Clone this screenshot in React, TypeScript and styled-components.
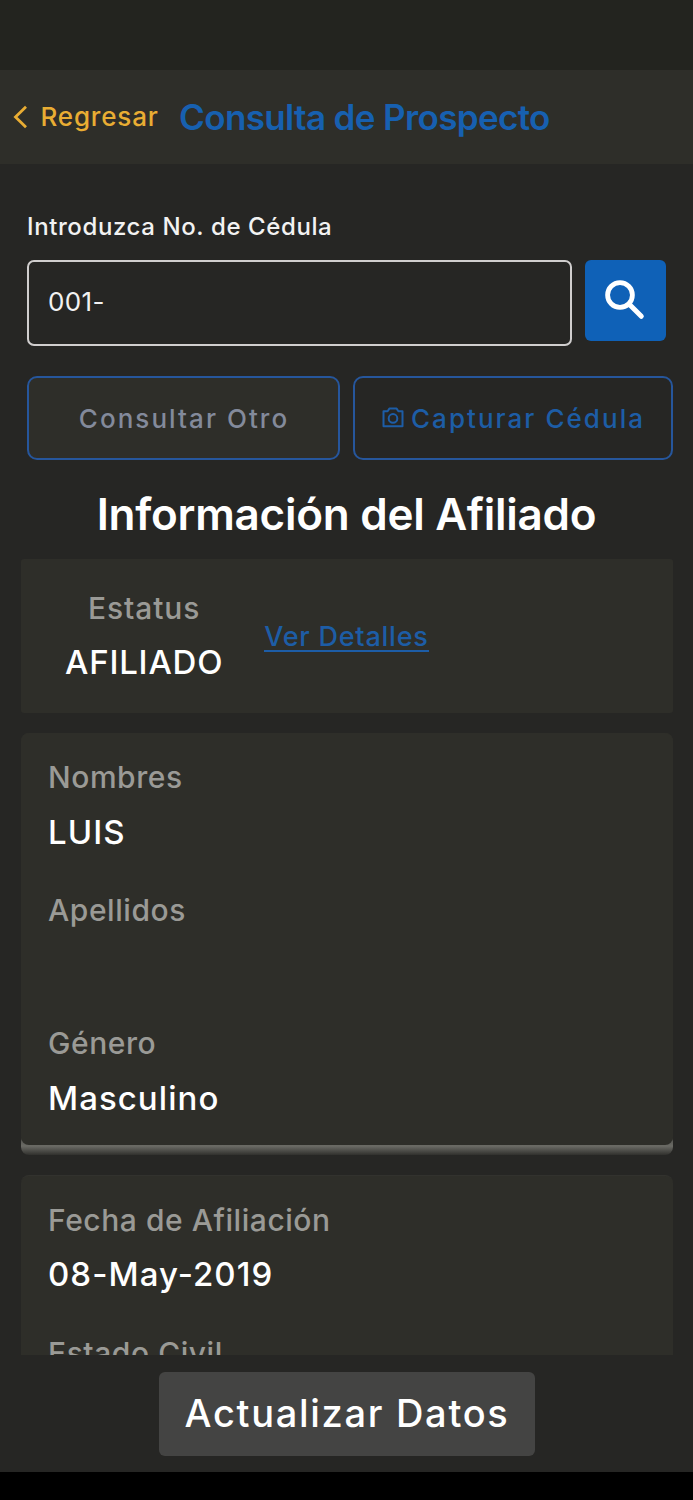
import React from 'react';
import styled, { createGlobalStyle } from 'styled-components';

const GlobalStyle = createGlobalStyle`
  *, *::before, *::after { box-sizing: border-box; }
  body {
    margin: 0;
    background: #000;
    font-family: Inter, "Liberation Sans", sans-serif;
    font-weight: 500;
  }
  button { font-family: inherit; font-weight: inherit; cursor: pointer; }
`;

const Screen = styled.div`
  display: flex;
  flex-direction: column;
  width: 693px;
  height: 1500px;
  overflow: hidden;
  background: #262624;
`;

const StatusBar = styled.div`
  flex: none;
  height: 70px;
  background: #23241f;
`;

const Header = styled.header`
  flex: none;
  display: flex;
  align-items: center;
  height: 94px;
  padding-left: 12px;
  background: #2e2e29;
`;

const BackButton = styled.button`
  display: flex;
  align-items: center;
  gap: 11.5px;
  margin-right: 20.5px;
  padding: 0;
  border: 0;
  background: none;
  color: #e9ad33;
  font-size: 26px;
  line-height: 32px;
  letter-spacing: 0.82px;
`;

const Title = styled.h1`
  margin: 0;
  color: #1760b0;
  font-size: 35px;
  font-weight: 600;
  line-height: 44px;
  letter-spacing: -0.64px;
`;

const Form = styled.form`
  flex: none;
  display: flex;
  flex-direction: column;
  padding: 48px 20px 0 27px;
`;

const InputLabel = styled.label`
  color: #f2f2f2;
  font-size: 24px;
  line-height: 30px;
  letter-spacing: 0.6px;
`;

const SearchRow = styled.div`
  display: flex;
  align-items: flex-start;
  gap: 13px;
  margin-top: 18px;
`;

const IdInput = styled.input`
  width: 545px;
  height: 86px;
  padding: 0 19px 4px;
  border: 2px solid #d0cece;
  border-radius: 7px;
  outline: 0;
  background: transparent;
  color: #f2f2f2;
  font-family: inherit;
  font-size: 26px;
  letter-spacing: 0.4px;
`;

const SearchButton = styled.button`
  display: flex;
  width: 81px;
  height: 81px;
  padding: 20px 0 0 20px;
  border: 0;
  border-radius: 6px;
  background: #0f61b7;
`;

const ActionRow = styled.div`
  display: flex;
  gap: 13px;
  margin-top: 30px;
`;

const OutlineButton = styled.button<{ $width: number; $muted?: boolean }>`
  display: flex;
  align-items: center;
  justify-content: center;
  gap: 7px;
  width: ${({ $width }) => $width}px;
  height: 84px;
  padding: 0 0 0 1px;
  border: 2px solid #26569c;
  border-radius: 10px;
  background: ${({ $muted }) => ($muted ? '#2e2e29' : 'transparent')};
  color: ${({ $muted }) => ($muted ? '#838a9b' : '#1d5da6')};
  font-size: 26px;
  letter-spacing: 2.04px;
`;

const SectionTitle = styled.h2`
  flex: none;
  margin: 27px 0 2px;
  color: #fff;
  font-size: 44px;
  font-weight: 600;
  line-height: 54px;
  letter-spacing: -0.26px;
  text-align: center;
`;

const Details = styled.main`
  flex: none;
  height: 812px;
  padding: 16px 20px 0 21px;
  overflow: hidden;
`;

const StatusCard = styled.section`
  display: flex;
  align-items: center;
  gap: 41px;
  height: 154px;
  padding: 2px 0 0 44px;
  border-radius: 3px;
  background: #2e2e29;
`;

const CardShadow = styled.div`
  margin-top: 20px;
  padding-bottom: 10px;
  border-radius: 8px;
  background: linear-gradient(to top, #30302d 0, #6b6b65 9px, #5a5a55 14px, #2e2e29 17px);
`;

const Card = styled.section`
  display: flex;
  flex-direction: column;
  gap: 38.5px;
  padding: 26.4px 27px 24.7px;
  border-radius: 8px;
  background: #2e2e29;
`;

const DateCard = styled(Card)`
  margin-top: 20px;
  border-top: 1px solid #32322e;
`;

const FieldLabel = styled.div`
  height: 36px;
  color: #9a9a96;
  font-size: 30px;
  line-height: 36px;
  letter-spacing: 0.55px;
`;

const FieldValue = styled.div`
  height: 44px;
  margin-top: 14.3px;
  margin-bottom: 0.2px;
  color: #fff;
  font-size: 33px;
  line-height: 44px;
  letter-spacing: 1.05px;
`;

const StatusText = styled.div`
  display: flex;
  flex-direction: column;
  align-items: center;

  ${FieldLabel} { letter-spacing: 0.9px; }
  ${FieldValue} { letter-spacing: 0.78px; }
`;

const DetailsLink = styled.a`
  border-bottom: 2px solid #1d5da6;
  color: #1d5da6;
  font-size: 27px;
  line-height: 27px;
  letter-spacing: 0.76px;
`;

const Footer = styled.footer`
  flex: none;
  display: flex;
  justify-content: center;
  height: 117px;
  padding-top: 17px;
`;

const UpdateButton = styled.button`
  width: 376px;
  height: 84px;
  padding: 0 0 2px 1px;
  border: 0;
  border-radius: 6px;
  background: #444443;
  color: #fff;
  font-size: 38px;
  letter-spacing: 1.7px;
`;

const HomeArea = styled.div`
  flex: none;
  height: 28px;
  background: #000;
`;

const ChevronIcon = () => (
  <svg width="17" height="24" viewBox="0 0 17 24" fill="none" stroke="currentColor" strokeWidth="2.8">
    <path d="M14 1.8 L3.5 12 L14 22.2" />
  </svg>
);

const SearchIcon = () => (
  <svg width="40" height="40" viewBox="0 0 40 40" fill="none" stroke="#fff">
    <circle cx="15" cy="15" r="12.4" strokeWidth="4.8" />
    <path d="M25 25 L36.3 36.3" strokeWidth="5" strokeLinecap="round" />
  </svg>
);

const CameraIcon = () => (
  <svg width="22" height="22" viewBox="0 0 22 22" fill="none" stroke="currentColor" strokeWidth="2">
    <path d="M1.5 4.3 H5.6 L7.4 1.6 H14.6 L16.4 4.3 H20.5 V19.2 H1.5 Z" strokeLinejoin="round" />
    <circle cx="11" cy="11.4" r="4.3" />
  </svg>
);

const Field = ({ label, value }: { label: string; value?: string }) => (
  <div>
    <FieldLabel>{label}</FieldLabel>
    <FieldValue>{value}</FieldValue>
  </div>
);

export default function App() {
  return (
    <>
      <GlobalStyle />
      <Screen>
        <StatusBar />
        <Header>
          <BackButton>
            <ChevronIcon />
            Regresar
          </BackButton>
          <Title>Consulta de Prospecto</Title>
        </Header>
        <Form>
          <InputLabel htmlFor="cedula">Introduzca No. de Cédula</InputLabel>
          <SearchRow>
            <IdInput id="cedula" defaultValue="001-" />
            <SearchButton type="button" aria-label="Buscar">
              <SearchIcon />
            </SearchButton>
          </SearchRow>
          <ActionRow>
            <OutlineButton type="button" $width={313} $muted>
              Consultar Otro
            </OutlineButton>
            <OutlineButton type="button" $width={320}>
              <CameraIcon />
              Capturar Cédula
            </OutlineButton>
          </ActionRow>
        </Form>
        <SectionTitle>Información del Afiliado</SectionTitle>
        <Details>
          <StatusCard>
            <StatusText>
              <FieldLabel>Estatus</FieldLabel>
              <FieldValue>AFILIADO</FieldValue>
            </StatusText>
            <DetailsLink>Ver Detalles</DetailsLink>
          </StatusCard>
          <CardShadow>
            <Card>
              <Field label="Nombres" value="LUIS" />
              <Field label="Apellidos" />
              <Field label="Género" value="Masculino" />
            </Card>
          </CardShadow>
          <DateCard>
            <Field label="Fecha de Afiliación" value="08-May-2019" />
            <Field label="Estado Civil" />
          </DateCard>
        </Details>
        <Footer>
          <UpdateButton>Actualizar Datos</UpdateButton>
        </Footer>
        <HomeArea />
      </Screen>
    </>
  );
}
